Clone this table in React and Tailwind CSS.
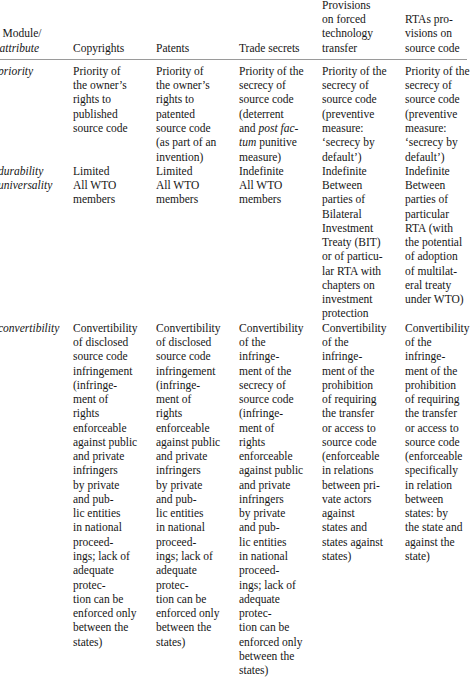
import React from "react";

const cols = "grid grid-cols-[73px_83px_83px_83px_83px_62px]";

const header = [
    ["Copyrights"],
    ["Patents"],
    ["Trade secrets"],
    ["Provisions", "on forced", "technology", "transfer"],
    ["RTAs pro-", "visions on", "source code"],
];

const convertIp = [
    "Convertibility",
    "of disclosed",
    "source code",
    "infringement",
    "(infringe-",
    "ment of",
    "rights",
    "enforceable",
    "against public",
    "and private",
    "infringers",
    "by private",
    "and pub-",
    "lic entities",
    "in national",
    "proceed-",
    "ings; lack of",
    "adequate",
    "protec-",
    "tion can be",
    "enforced only",
    "between the",
    "states)",
];

const rows = [
    {
        label: "priority",
        cells: [
            ["Priority of", "the owner’s", "rights to", "published", "source code"],
            [
                "Priority of",
                "the owner’s",
                "rights to",
                "patented",
                "source code",
                "(as part of an",
                "invention)",
            ],
            [
                "Priority of the",
                "secrecy of",
                "source code",
                "(deterrent",
                <>
                    and <i>post fac-</i>
                </>,
                <>
                    <i>tum</i> punitive
                </>,
                "measure)",
            ],
            [
                "Priority of the",
                "secrecy of",
                "source code",
                "(preventive",
                "measure:",
                "‘secrecy by",
                "default’)",
            ],
            [
                "Priority of the",
                "secrecy of",
                "source code",
                "(preventive",
                "measure:",
                "‘secrecy by",
                "default’)",
            ],
        ],
    },
    {
        label: "durability",
        cells: [["Limited"], ["Limited"], ["Indefinite"], ["Indefinite"], ["Indefinite"]],
    },
    {
        label: "universality",
        cells: [
            ["All WTO", "members"],
            ["All WTO", "members"],
            ["All WTO", "members"],
            [
                "Between",
                "parties of",
                "Bilateral",
                "Investment",
                "Treaty (BIT)",
                "or of particu-",
                "lar RTA with",
                "chapters on",
                "investment",
                "protection",
            ],
            [
                "Between",
                "parties of",
                "particular",
                "RTA (with",
                "the potential",
                "of adoption",
                "of multilat-",
                "eral treaty",
                "under WTO)",
            ],
        ],
    },
    {
        label: "convertibility",
        cells: [
            convertIp,
            convertIp,
            [
                "Convertibility",
                "of the",
                "infringe-",
                "ment of the",
                "secrecy of",
                "source code",
                "(infringe-",
                "ment of",
                "rights",
                "enforceable",
                "against public",
                "and private",
                "infringers",
                "by private",
                "and pub-",
                "lic entities",
                "in national",
                "proceed-",
                "ings; lack of",
                "adequate",
                "protec-",
                "tion can be",
                "enforced only",
                "between the",
                "states)",
            ],
            [
                "Convertibility",
                "of the",
                "infringe-",
                "ment of the",
                "prohibition",
                "of requiring",
                "the transfer",
                "or access to",
                "source code",
                "(enforceable",
                "in relations",
                "between pri-",
                "vate actors",
                "against",
                "states and",
                "states against",
                "states)",
            ],
            [
                "Convertibility",
                "of the",
                "infringe-",
                "ment of the",
                "prohibition",
                "of requiring",
                "the transfer",
                "or access to",
                "source code",
                "(enforceable",
                "specifically",
                "in relation",
                "between",
                "states: by",
                "the state and",
                "against the",
                "state)",
            ],
        ],
    },
];

const Lines = ({ lines, hanging }) => (
    <div className={hanging ? "pl-[5.5px] -indent-[5.5px]" : ""}>
        {lines.map((line, i) => (
            <div key={i} className="whitespace-nowrap">
                {line}
            </div>
        ))}
    </div>
);

export default function App() {
    return (
        <div className="w-[474px] h-[679px] overflow-hidden bg-white text-[#161616] text-[11.5px] leading-[14.26px] font-['Liberation_Serif','Times_New_Roman',serif]">
            <div className="-mt-[2.3px] w-[467px]">
                {/* Header */}
                <div className={`${cols} items-end pb-[4.3px] border-b border-[#9a9a9a]`}>
                    <div className="pl-[2.5px]">
                        <div>Module/</div>
                        <div className="italic -ml-[3px]">attribute</div>
                    </div>
                    {header.map((lines, i) => (
                        <Lines key={i} lines={lines} />
                    ))}
                </div>

                {/* Body */}
                <div className="pt-[3.9px]">
                    {rows.map((row) => (
                        <div key={row.label} className={`${cols} items-start`}>
                            <div className="italic -ml-[2px] whitespace-nowrap">{row.label}</div>
                            {row.cells.map((lines, i) => (
                                <Lines key={i} lines={lines} hanging />
                            ))}
                        </div>
                    ))}
                </div>
            </div>
        </div>
    );
}
